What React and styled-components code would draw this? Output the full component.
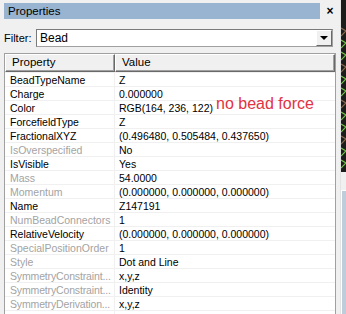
import React from "react";
import styled, { createGlobalStyle } from "styled-components";

const Global = createGlobalStyle`
  html, body { margin: 0; padding: 0; }
  body { background: #f0f0f0; }
`;

const Root = styled.div`
  display: flex;
  width: 346px;
  height: 314px;
  overflow: hidden;
  background: #f0f0f0;
  font-family: "Liberation Sans", Arial, sans-serif;
  font-size: 10.5px;
  color: #000;
`;

const Panel = styled.div`
  position: relative;
  width: 340px;
  display: flex;
  flex-direction: column;
`;

const TitleRow = styled.div`
  display: flex;
  align-items: center;
  padding: 3px 0 0 4px;
  height: 16px;
`;

const Title = styled.div`
  width: 316px;
  height: 16px;
  line-height: 16px;
  padding-left: 4px;
  background: #99b4d1;
  font-size: 11.5px;
`;

const Close = styled.div`
  width: 20px;
  text-align: center;
  font-weight: bold;
  font-size: 12px;
  line-height: 16px;
`;

const FilterRow = styled.div`
  display: flex;
  align-items: center;
  margin-top: 10px;
  padding-left: 4px;
  height: 18px;
  font-size: 11px;
`;

const Label = styled.span`
  width: 32px;
`;

const Combo = styled.div`
  display: flex;
  width: 297px;
  height: 18px;
  box-sizing: border-box;
  border: 1px solid #a0a0a0;
  border-top-color: #7a7a7a;
  border-left-color: #7a7a7a;
  background: #fff;
`;

const ComboText = styled.div`
  flex: 1;
  padding-left: 3px;
  line-height: 16px;
  font-size: 12px;
`;

const ComboButton = styled.div`
  width: 16px;
  height: 16px;
  box-sizing: border-box;
  background: #f0f0f0;
  border: 1px solid #fff;
  border-right-color: #696969;
  border-bottom-color: #696969;
  display: flex;
  align-items: center;
  justify-content: center;
`;

const Arrow = styled.div`
  width: 0;
  height: 0;
  border-left: 4px solid transparent;
  border-right: 4px solid transparent;
  border-top: 4px solid #000;
`;

const Table = styled.div`
  margin: 6px 0 0 4px;
  width: 332px;
  flex: 1;
  box-sizing: border-box;
  border: 1px solid #a0a0a0;
  border-bottom: none;
  background: #fff;
  overflow: hidden;
`;

const Header = styled.div`
  display: flex;
  height: 18px;
  background: #f0f0f0;
`;

const HeadCell = styled.div`
  box-sizing: border-box;
  width: ${(p) => p.$w}px;
  flex: ${(p) => (p.$grow ? 1 : "none")};
  height: 18px;
  line-height: 15px;
  padding-left: 6px;
  border: 1px solid #fff;
  border-right-color: #696969;
  border-bottom-color: #696969;
  box-shadow: inset -1px -1px 0 #a0a0a0;
  font-size: 11.5px;
`;

const Row = styled.div`
  display: flex;
  height: 14px;
  box-sizing: border-box;
  border-top: 1px solid #f0f0f0;
  line-height: 14px;
`;

const Name = styled.div`
  width: 110px;
  height: 13px;
  box-sizing: border-box;
  padding-left: 5px;
  border-right: 1px solid #f0f0f0;
  color: ${(p) => (p.$disabled ? "#a3a3a3" : "#000")};
  white-space: nowrap;
  overflow: hidden;
  letter-spacing: ${(p) => (p.$tight ? "-0.15px" : "0")};
`;

const Value = styled.div`
  flex: 1;
  height: 13px;
  padding-left: 4px;
  white-space: nowrap;
  overflow: hidden;
`;

const Note = styled.div`
  position: absolute;
  left: 216px;
  top: 95px;
  color: #e23342;
  font-family: "Liberation Sans", Arial, sans-serif;
  font-size: 16px;
  line-height: 18px;
`;

const Side = styled.div`
  width: 6px;
  display: flex;
  flex-direction: column;
  border-left: 1px solid #e3e3e3;
`;

const SideView = styled.div`
  height: 172px;
  background: #1c1c1a;
`;

const SideGap = styled.div`
  height: 18px;
  background: #f0f0f0;
`;

const SideBottom = styled.div`
  flex: 1;
  background: #bfcddb;
  border-top: 1px solid #fff;
  border-left: 1px solid #fff;
`;

const rows = [
  ["BeadTypeName", "Z", false],
  ["Charge", "0.000000", false],
  ["Color", "RGB(164, 236, 122)", false],
  ["ForcefieldType", "Z", false],
  ["FractionalXYZ", "(0.496480, 0.505484, 0.437650)", false],
  ["IsOverspecified", "No", true],
  ["IsVisible", "Yes", false],
  ["Mass", "54.0000", true],
  ["Momentum", "(0.000000, 0.000000, 0.000000)", true],
  ["Name", "Z147191", false],
  ["NumBeadConnectors", "1", true],
  ["RelativeVelocity", "(0.000000, 0.000000, 0.000000)", false],
  ["SpecialPositionOrder", "1", true],
  ["Style", "Dot and Line", true],
  ["SymmetryConstraint...", "x,y,z", true, true],
  ["SymmetryConstraint...", "Identity", true, true],
  ["SymmetryDerivation...", "x,y,z", true, true],
  ["SymmetryOperation", "Identity", true],
];

function Zigzag() {
  const lines = [];
  for (let y = 36; y < 170; y += 12) {
    lines.push(
      <polyline
        key={y}
        points={`0,${y} 5,${y - 5} 0,${y - 8}`}
        fill="none"
        stroke={y % 36 === 0 ? "#8a6a50" : "#72c04a"}
        strokeWidth="1.2"
      />
    );
  }
  return (
    <svg width="5" height="172" viewBox="0 0 5 172">
      {lines}
    </svg>
  );
}

export default function App() {
  return (
    <Root>
      <Global />
      <Panel>
        <TitleRow>
          <Title>Properties</Title>
          <Close>×</Close>
        </TitleRow>
        <FilterRow>
          <Label>Filter:</Label>
          <Combo>
            <ComboText>Bead</ComboText>
            <ComboButton>
              <Arrow />
            </ComboButton>
          </Combo>
        </FilterRow>
        <Table>
          <Header>
            <HeadCell $w={110}>Property</HeadCell>
            <HeadCell $grow>Value</HeadCell>
          </Header>
          {rows.map(([n, v, d, t], i) => (
            <Row key={i}>
              <Name $disabled={d} $tight={t}>{n}</Name>
              <Value>{v}</Value>
            </Row>
          ))}
        </Table>
        <Note>no bead force</Note>
      </Panel>
      <Side>
        <SideView>
          <Zigzag />
        </SideView>
        <SideGap />
        <SideBottom />
      </Side>
    </Root>
  );
}
